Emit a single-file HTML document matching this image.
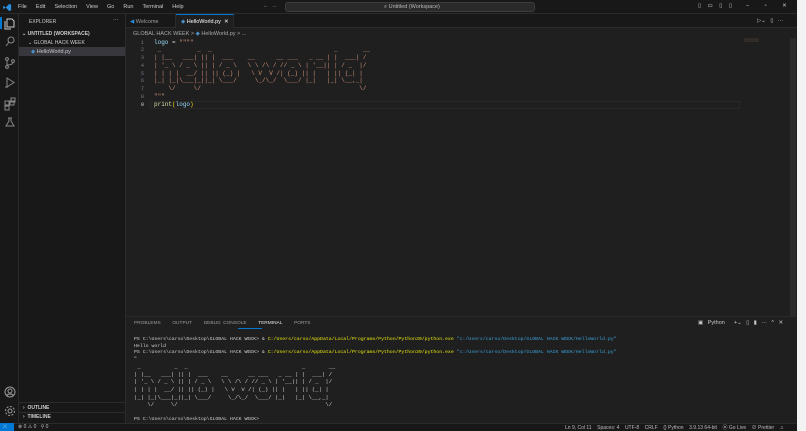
<!DOCTYPE html>
<html><head><meta charset="utf-8"><style>
*{margin:0;padding:0;box-sizing:border-box}
body{width:806px;height:431px;overflow:hidden;background:#f3f3f3;font-family:"Liberation Sans",sans-serif;position:relative;color:#ccc}
.a{position:absolute;white-space:nowrap}
.m{font-family:"Liberation Mono",monospace;white-space:pre}
.s{font-size:5.5px;color:#ccc}
</style></head><body>
<div class="a" style="left:0;top:0;width:797px;height:431px;background:#1f1f1f"></div>
<!-- title bar -->
<div class="a" style="left:0;top:0;width:797px;height:14px;background:#181818;border-bottom:1px solid #2b2b2b"></div>
<svg class="a" style="left:3px;top:3px" width="9" height="9" viewBox="0 0 10 10"><path d="M7 1L3 5 1 3.5 0 4v2l1 .5 2-1.5 4 4 2-1V2z" fill="#2b8fe0"/></svg>
<div class="a s" style="left:18px;top:4px;color:#ccc;word-spacing:3px">File&nbsp; Edit&nbsp; Selection&nbsp; View&nbsp; Go&nbsp; Run&nbsp; Terminal&nbsp; Help</div>
<div class="a s" style="left:263px;top:3px;color:#888">←&nbsp; →</div>
<div class="a" style="left:285px;top:2px;width:250px;height:10px;background:#2a2a2a;border:1px solid #3c3c3c;border-radius:3px"></div>
<div class="a s" style="left:384px;top:4px;color:#bbb">⌕ Untitled (Workspace)</div>
<div class="a s" style="left:698px;top:3px;color:#ccc;word-spacing:5px">▯ ▭ ▯ ▯</div>
<div class="a s" style="left:746px;top:3px;color:#ccc;word-spacing:14px">–  ▫ ✕</div>
<!-- activity bar -->
<div class="a" style="left:0;top:14px;width:19px;height:409px;background:#181818;border-right:1px solid #2b2b2b"></div>
<div class="a" style="left:0;top:17px;width:1.5px;height:12px;background:#0078d4"></div>
<svg class="a" style="left:4px;top:17px" width="12" height="110" viewBox="0 0 12 110" fill="none" stroke="#888" stroke-width="1">
<path d="M3 2h5l2 2v6H3zM1 4v8h6" stroke="#ccc"/>
<circle cx="7" cy="23" r="3"/><path d="M5 25l-3 4"/>
<circle cx="3" cy="42" r="1.4"/><circle cx="3" cy="50" r="1.4"/><circle cx="9" cy="44" r="1.4"/><path d="M3 43.5v5M9 45.5c0 3-6 2-6 3"/>
<path d="M3 61v9l7-4.5z M1 70h3"/>
<path d="M1 84h4v4H1zM6 84h4v4H6zM1 89h4v4H1zM7 81h4v4H7z"/>
<path d="M4 101h4M5 101v3l-3 5h8l-3-5v-3"/>
</svg>
<svg class="a" style="left:4px;top:386px" width="12" height="32" viewBox="0 0 12 32" fill="none" stroke="#999" stroke-width="1"><circle cx="6" cy="6" r="5"/><circle cx="6" cy="5" r="2"/><path d="M2.5 9.5c2-2 5-2 7 0"/><circle cx="6" cy="25" r="2"/><circle cx="6" cy="25" r="4.5" stroke-dasharray="2 1.5"/></svg>
<!-- sidebar -->
<div class="a" style="left:19px;top:14px;width:107px;height:409px;background:#181818;border-right:1px solid #2b2b2b"></div>
<div class="a s" style="left:29px;top:18.5px;font-size:5px">EXPLORER</div>
<div class="a s" style="left:113px;top:17px">···</div>
<div class="a s" style="left:22px;top:30.5px;font-size:5px;font-weight:bold">⌄ UNTITLED (WORKSPACE)</div>
<div class="a s" style="left:28px;top:39.5px;font-size:5px">⌄ GLOBAL HACK WEEK</div>
<div class="a" style="left:19px;top:47px;width:106px;height:9px;background:#37373d"></div>
<div class="a s" style="left:31px;top:48.5px"><span style="color:#4a90c8">◆</span> HelloWorld.py</div>
<div class="a" style="left:19px;top:402px;width:106px;height:1px;background:#2b2b2b"></div>
<div class="a s" style="left:23px;top:405px;font-size:5px;font-weight:bold">›&nbsp; OUTLINE</div>
<div class="a" style="left:19px;top:412px;width:106px;height:1px;background:#2b2b2b"></div>
<div class="a s" style="left:23px;top:414px;font-size:5px;font-weight:bold">›&nbsp; TIMELINE</div>
<!-- tabs -->
<div class="a" style="left:126px;top:14px;width:671px;height:14px;background:#181818;border-bottom:1px solid #2b2b2b"></div>
<div class="a" style="left:126px;top:14px;width:50px;height:14px;border-right:1px solid #2b2b2b"></div>
<div class="a s" style="left:130px;top:18.5px;color:#9d9d9d"><span style="color:#2b8fe0">◀</span> Welcome</div>
<div class="a" style="left:176px;top:14px;width:58px;height:14px;background:#1f1f1f;border-top:1px solid #0078d4;border-right:1px solid #2b2b2b"></div>
<div class="a s" style="left:181px;top:18.5px;color:#fff"><span style="color:#4a90c8">◆</span> HelloWorld.py&nbsp; ✕</div>
<div class="a s" style="left:757px;top:18px;color:#ccc;word-spacing:3px">▷⌄ ▯ ···</div>
<div class="a s" style="left:133px;top:30.5px;color:#a9a9a9">GLOBAL HACK WEEK &gt; <span style="color:#4a90c8">◆</span> HelloWorld.py &gt; ...</div>
<!-- code -->
<div class="a m" style="left:130px;top:38.5px;width:14px;text-align:right;font-size:5.5px;line-height:7.8px;color:#6e7681">1
2
3
4
5
6
7
8
<span style="color:#ccc">9</span></div>
<div class="a" style="left:150px;top:101px;width:590px;height:7.8px;border:1px solid #282828"></div>
<div class="a m" style="left:154px;top:38.5px;font-size:6px;line-height:7.8px;color:#ce9178"><span style="color:#9cdcfe">logo</span> <span style="color:#d4d4d4">=</span> """"
 _          _  _                                  _       __
| |__   ___| || |  ___    __      __ ___   _ __ | |  ___| /
| '_ \ / _ \ || | / _ \   \ \ /\ / // _ \ | '__|| | / _  |/
| | | |  __/ || || (_) |   \ V  V /| (_) || |   | || (_| |
|_| |_|\___|_||_| \___/     \_/\_/  \___/ |_|   |_| \__,_|
    \/     \/                                            \/
"""
<span style="color:#dcdcaa">print</span><span style="color:#ffd700">(</span><span style="color:#9cdcfe">logo</span><span style="color:#ffd700">)</span></div>
<div class="a" style="left:744px;top:38px;width:28px;height:8px;font-size:3px;color:#6b5a4a">▒▒▒▒▒▒▒</div>
<div class="a" style="left:790px;top:38px;width:6px;height:278px;background:#2a2a2a"></div>
<!-- panel -->
<div class="a" style="left:126px;top:316px;width:671px;height:1px;background:#2b2b2b"></div>
<div class="a s" style="left:134px;top:321px;font-size:4.8px;color:#9d9d9d;word-spacing:1px">PROBLEMS&nbsp;&nbsp;&nbsp;&nbsp; OUTPUT&nbsp;&nbsp;&nbsp;&nbsp; DEBUG CONSOLE&nbsp;&nbsp;&nbsp;&nbsp; <span style="color:#e7e7e7">TERMINAL</span>&nbsp;&nbsp;&nbsp;&nbsp; PORTS</div>
<div class="a" style="left:238px;top:328px;width:24px;height:1px;background:#0078d4"></div>
<div class="a s" style="left:698px;top:320px;color:#ccc;word-spacing:3px">▣ Python&nbsp; +⌄ ▯ ▮ ··· ^ ✕</div>
<div class="a m" style="left:134px;top:337px;font-size:4.85px;line-height:6.7px;color:#ccc">PS C:\Users\carso\Desktop\GLOBAL HACK WEEK&gt; &amp; <span style="color:#e5e510">C:/Users/carso/AppData/Local/Programs/Python/Python39/python.exe</span> <span style="color:#3b9fd8">"c:/Users/carso/Desktop/GLOBAL HACK WEEK/HelloWorld.py"</span>
Hello world
PS C:\Users\carso\Desktop\GLOBAL HACK WEEK&gt; &amp; <span style="color:#e5e510">C:/Users/carso/AppData/Local/Programs/Python/Python39/python.exe</span> <span style="color:#3b9fd8">"c:/Users/carso/Desktop/GLOBAL HACK WEEK/HelloWorld.py"</span>
"
<span style="font-size:5.6px"> _          _  _                                  _       __
| |__   ___| || |  ___    __      __ ___   _ __ | |  ___| /
| '_ \ / _ \ || | / _ \   \ \ /\ / // _ \ | '__|| | / _  |/
| | | |  __/ || || (_) |   \ V  V /| (_) || |   | || (_| |
|_| |_|\___|_||_| \___/     \_/\_/  \___/ |_|   |_| \__,_|
    \/     \/                                            \/</span>

PS C:\Users\carso\Desktop\GLOBAL HACK WEEK&gt;</div>
<!-- status bar -->
<div class="a" style="left:0;top:423px;width:797px;height:8px;background:#181818;border-top:1px solid #2b2b2b"></div>
<div class="a" style="left:0;top:423px;width:14px;height:8px;background:#0078d4"></div>
<div class="a s" style="left:3px;top:423.5px;font-size:5px;color:#fff">⤫</div>
<div class="a s" style="left:18px;top:424px;font-size:5px;color:#bbb">⊗ 0 ⚠ 0&nbsp;&nbsp; ⚲ 0</div>
<div class="a s" style="left:565px;top:424px;font-size:5px;color:#bbb">Ln 9, Col 11&nbsp;&nbsp;&nbsp; Spaces: 4&nbsp;&nbsp;&nbsp; UTF-8&nbsp;&nbsp;&nbsp; CRLF&nbsp;&nbsp;&nbsp; {} Python&nbsp;&nbsp;&nbsp; 3.9.13 64-bit&nbsp;&nbsp;&nbsp; ⦿ Go Live&nbsp;&nbsp;&nbsp; ⊘ Prettier&nbsp;&nbsp;&nbsp; ♫</div>
</body></html>
